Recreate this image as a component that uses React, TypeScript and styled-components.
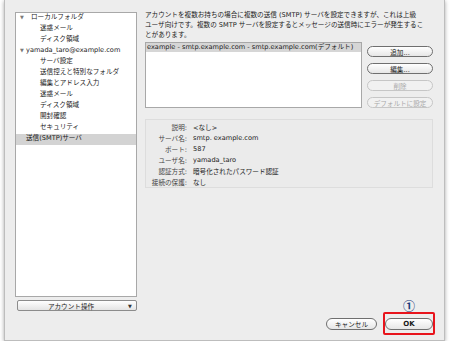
import React from 'react'
import styled, { createGlobalStyle } from 'styled-components'

const GlobalStyle = createGlobalStyle`
  html, body {
    margin: 0;
    padding: 0;
    background: #fff;
  }
  body {
    font-family: "DejaVu Sans", "Noto Sans CJK JP", sans-serif;
    font-size: 6.6px;
    color: #1a1a1a;
  }
`

const Window = styled.div`
  box-sizing: border-box;
  margin-left: 4px;
  width: 441px;
  height: 341px;
  display: flex;
  padding: 10px 11px 5px 10px;
  background: #ededed;
  border: 1px solid #bdbdbd;
  border-top: none;
  box-shadow: 0 1px 4px rgba(0, 0, 0, 0.35);
`

const LeftColumn = styled.div`
  width: 122px;
  padding-top: 2px;
  display: flex;
  flex-direction: column;
`

const TreePanel = styled.div`
  box-sizing: border-box;
  height: 285px;
  background: #fff;
  border: 1px solid #a8a8a8;
`

const TreeRow = styled.div<{ $pad: number; $selected?: boolean }>`
  display: flex;
  align-items: center;
  height: 11px;
  line-height: 9px;
  padding: 0 0 2px ${({ $pad }) => $pad}px;
  box-sizing: border-box;
  background: ${({ $selected }) => ($selected ? '#d3d3d3' : 'transparent')};
  white-space: nowrap;
`

const Caret = styled.span<{ $w: number }>`
  width: ${({ $w }) => $w}px;
  font-size: 5px;
  color: #7a7a7a;
`

const AccountButton = styled.div`
  box-sizing: border-box;
  margin: 3px 0 0 2px;
  width: 120px;
  height: 11px;
  display: flex;
  align-items: center;
  border: 1px solid #8c8c8c;
  border-radius: 2px;
  background: linear-gradient(#ffffff, #e4e4e4);
`

const AccountLabel = styled.span`
  flex: 1;
  text-align: center;
`

const AccountArrow = styled.span`
  width: 12px;
  font-size: 5px;
  text-align: center;
  color: #333;
`

const RightColumn = styled.div`
  width: 288px;
  margin-left: 8px;
  display: flex;
  flex-direction: column;
`

const Intro = styled.p`
  margin: 0;
  line-height: 10px;
  white-space: nowrap;
`

const ServerRow = styled.div`
  display: flex;
  margin-top: 2px;
  gap: 5px;
`

const ServerList = styled.div`
  box-sizing: border-box;
  width: 217px;
  height: 66px;
  background: #fff;
  border: 1px solid #a8a8a8;
`

const ServerItem = styled.div`
  height: 9px;
  line-height: 9px;
  padding-left: 1px;
  background: #d6d6d6;
  white-space: nowrap;
`

const ButtonStack = styled.div`
  display: flex;
  flex-direction: column;
  gap: 6px;
  padding-top: 4px;
`

const Pill = styled.div<{ $disabled?: boolean; $w?: number; $h?: number }>`
  box-sizing: border-box;
  width: ${({ $w }) => $w ?? 66}px;
  height: ${({ $h }) => $h ?? 11}px;
  display: flex;
  align-items: center;
  justify-content: center;
  border-radius: 7px;
  border: 1px solid ${({ $disabled }) => ($disabled ? '#c6c6c6' : '#6f6f6f')};
  color: ${({ $disabled }) => ($disabled ? '#a9a9a9' : '#1a1a1a')};
  background: ${({ $disabled }) =>
    $disabled ? '#f1f1f1' : 'linear-gradient(#ffffff, #e6e6e6)'};
  white-space: nowrap;
`

const Details = styled.div`
  box-sizing: border-box;
  margin-top: 11px;
  height: 69px;
  padding-top: 1px;
  background: #ebebeb;
  border: 1px solid #dddddd;
  display: grid;
  grid-template-columns: 41px 1fr;
  grid-auto-rows: 11px;
  column-gap: 6px;
  align-items: center;
`

const Label = styled.span`
  text-align: right;
  color: #444;
  white-space: nowrap;
`

const Value = styled.span`
  white-space: nowrap;
`

const Footer = styled.div`
  margin-top: auto;
  margin-right: -2px;
  display: flex;
  justify-content: flex-end;
  align-items: center;
  gap: 6px;
`

const Highlight = styled.div`
  position: relative;
  box-sizing: border-box;
  width: 52px;
  height: 23px;
  display: flex;
  align-items: center;
  justify-content: center;
  border: 2px solid #e8141c;
  border-radius: 2px;
`

const StepBadge = styled.span`
  position: absolute;
  bottom: calc(100% + 2px);
  left: 50%;
  transform: translateX(-50%);
  font-family: "Noto Sans CJK JP", sans-serif;
  font-size: 12px;
  line-height: 12px;
  font-weight: 700;
  color: #1b3a7a;
`

const OkText = styled.span`
  font-weight: 700;
  font-size: 7px;
`

const details: [string, string][] = [
  ['説明:', '<なし>'],
  ['サーバ名:', 'smtp. example.com'],
  ['ポート:', '587'],
  ['ユーザ名:', 'yamada_taro'],
  ['認証方式:', '暗号化されたパスワード認証'],
  ['接続の保護:', 'なし'],
]

export default function App() {
  return (
    <>
      <GlobalStyle />
      <Window>
        <LeftColumn>
          <TreePanel>
            <TreeRow $pad={4}>
              <Caret $w={11}>▼</Caret>ローカルフォルダ
            </TreeRow>
            <TreeRow $pad={24}>迷惑メール</TreeRow>
            <TreeRow $pad={24}>ディスク領域</TreeRow>
            <TreeRow $pad={4}>
              <Caret $w={6}>▼</Caret>yamada_taro@example.com
            </TreeRow>
            <TreeRow $pad={24}>サーバ設定</TreeRow>
            <TreeRow $pad={24}>送信控えと特別なフォルダ</TreeRow>
            <TreeRow $pad={24}>編集とアドレス入力</TreeRow>
            <TreeRow $pad={24}>迷惑メール</TreeRow>
            <TreeRow $pad={24}>ディスク領域</TreeRow>
            <TreeRow $pad={24}>開封確認</TreeRow>
            <TreeRow $pad={24}>セキュリティ</TreeRow>
            <TreeRow $pad={10} $selected>
              送信(SMTP)サーバ
            </TreeRow>
          </TreePanel>
          <AccountButton>
            <AccountLabel>アカウント操作</AccountLabel>
            <AccountArrow>▼</AccountArrow>
          </AccountButton>
        </LeftColumn>

        <RightColumn>
          <Intro>
            アカウントを複数お持ちの場合に複数の送信 (SMTP) サーバを設定できますが、これは上級
            <br />
            ユーザ向けです。複数の SMTP サーバを設定するとメッセージの送信時にエラーが発生するこ
            <br />
            とがあります。
          </Intro>

          <ServerRow>
            <ServerList>
              <ServerItem>example - smtp.example.com - smtp.example.com(デフォルト)</ServerItem>
            </ServerList>
            <ButtonStack>
              <Pill>追加...</Pill>
              <Pill>編集...</Pill>
              <Pill $disabled>削除</Pill>
              <Pill $disabled>デフォルトに設定</Pill>
            </ButtonStack>
          </ServerRow>

          <Details>
            {details.map(([k, v]) => (
              <React.Fragment key={k}>
                <Label>{k}</Label>
                <Value>{v}</Value>
              </React.Fragment>
            ))}
          </Details>

          <Footer>
            <Pill $w={51} $h={12}>キャンセル</Pill>
            <Highlight>
              <StepBadge>①</StepBadge>
              <Pill $w={48} $h={12}>
                <OkText>OK</OkText>
              </Pill>
            </Highlight>
          </Footer>
        </RightColumn>
      </Window>
    </>
  )
}
